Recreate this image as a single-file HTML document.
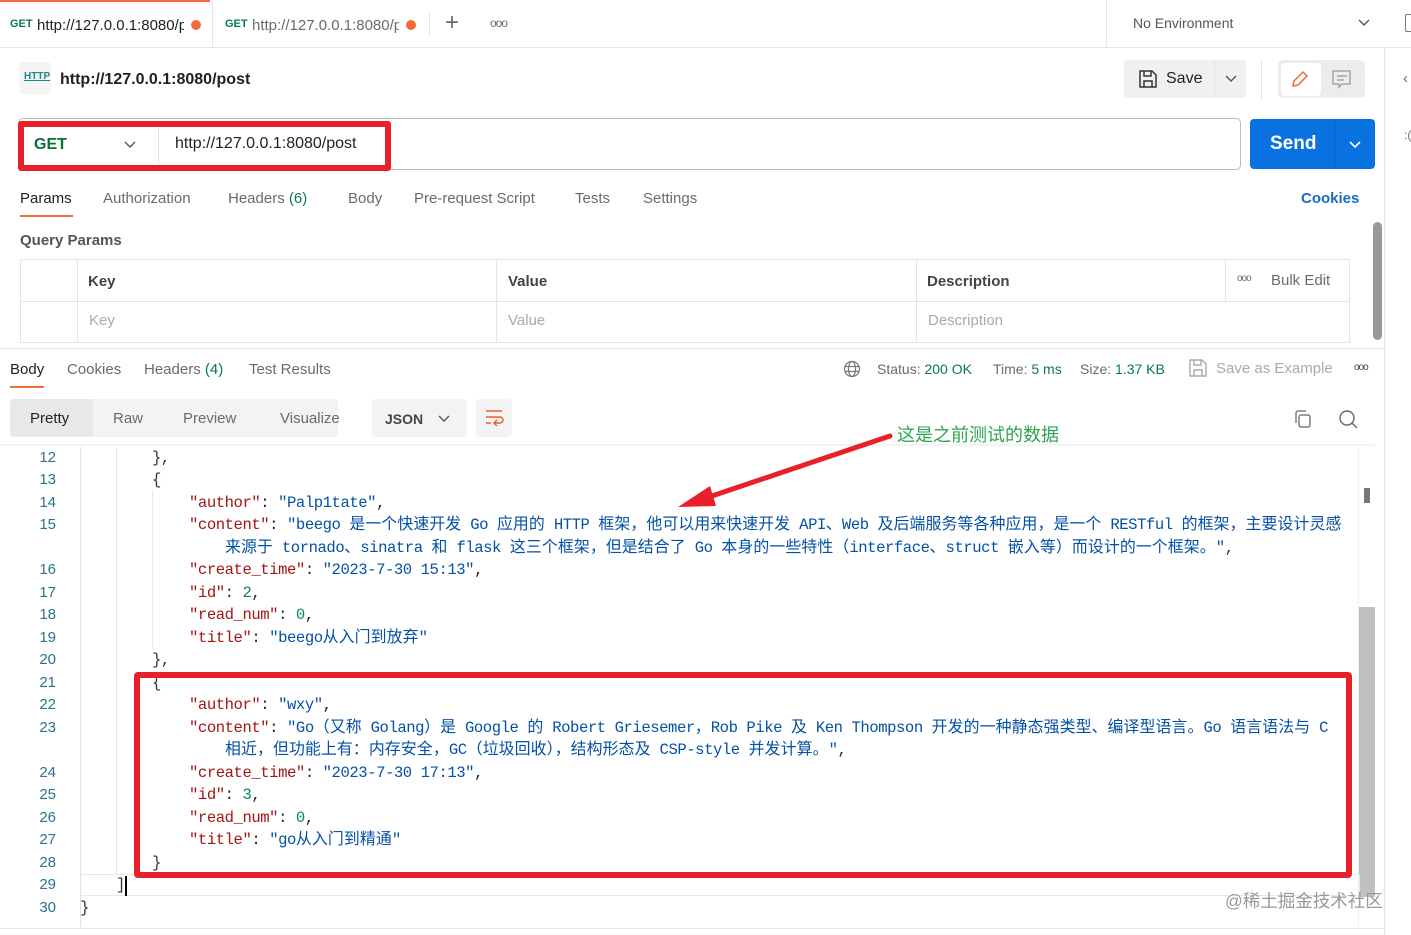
<!DOCTYPE html>
<html><head><meta charset="utf-8"><style>
*{margin:0;padding:0;box-sizing:border-box}
body{width:1411px;height:935px;overflow:hidden;background:#fff;font-family:"Liberation Sans","Noto Sans CJK SC",sans-serif;color:#212121;position:relative}
.a{position:absolute;white-space:nowrap}
.g{color:#6b6b6b}
.code{font-family:"Liberation Mono","Noto Sans CJK SC",monospace;font-size:15.6px;line-height:20px;height:20px;letter-spacing:-0.45px}
.c{font-size:15.9px;letter-spacing:0.1px}
.k{color:#a31515}.s{color:#0451a5}.n{color:#098658}.p{color:#333}
.ln{position:absolute;width:56px;text-align:right;color:#2b7489;font-family:"Liberation Sans",sans-serif;font-size:15px}
</style></head><body>
<!-- tab bar -->
<div class="a" style="left:0;top:0;width:210px;height:2px;background:#f26b3a"></div>
<div class="a" style="left:0;top:47px;width:1411px;height:1px;background:#e6e6e6"></div>
<div class="a" style="left:212px;top:0;width:1px;height:47px;background:#e6e6e6"></div>
<div class="a" style="left:10px;top:18px;font-size:11px;font-weight:bold;color:#0a7a4a">GET</div>
<div class="a" style="left:37px;top:17px;font-size:15px;width:147px;overflow:hidden">http://127.0.0.1:8080/post</div>
<div class="a" style="left:191px;top:20px;width:10px;height:10px;border-radius:5px;background:#f26b3a"></div>
<div class="a" style="left:225px;top:18px;font-size:11px;font-weight:bold;color:#0a7a4a">GET</div>
<div class="a g" style="left:252px;top:17px;font-size:15px;width:147px;overflow:hidden">http://127.0.0.1:8080/post</div>
<div class="a" style="left:406px;top:20px;width:10px;height:10px;border-radius:5px;background:#f26b3a"></div>
<div class="a" style="left:429px;top:12px;width:1px;height:24px;background:#e6e6e6"></div>
<div class="a g" style="left:445px;top:9px;font-size:24px;font-weight:300">+</div>
<div class="a g" style="left:490px;top:16px;font-size:12px;letter-spacing:-1px">ooo</div>
<div class="a" style="left:1106px;top:0;width:1px;height:47px;background:#e6e6e6"></div>
<div class="a g" style="left:1133px;top:15px;font-size:14px;color:#555">No Environment</div>
<svg class="a" style="left:1357px;top:17px" width="14" height="12"><path d="M2 3l5 5 5-5" stroke="#555" fill="none" stroke-width="1.4"/></svg>
<div class="a" style="left:1405px;top:14px;width:8px;height:18px;border:1.5px solid #777;border-radius:2px"></div>
<!-- right sidebar -->
<div class="a" style="left:1384px;top:48px;width:1px;height:887px;background:#e6e6e6"></div>
<div class="a g" style="left:1403px;top:70px;font-size:15px">‹</div>
<div class="a g" style="left:1404px;top:128px;font-size:12px">:(</div>
<!-- request title -->
<div class="a" style="left:19px;top:62px;width:32px;height:32px;background:#f4f4f4;border-radius:4px"></div>
<div class="a" style="left:24px;top:71px;font-size:10px;color:#1a8a8a;text-decoration:underline;font-weight:bold">HTTP</div>
<div class="a" style="left:60px;top:71px;font-size:16px;font-weight:bold">http://127.0.0.1:8080/post</div>
<div class="a" style="left:1124px;top:60px;width:122px;height:38px;background:#f0f0f0;border-radius:4px"></div>
<div class="a" style="left:1214px;top:60px;width:1px;height:38px;background:#e2e2e2"></div>
<svg class="a" style="left:1138px;top:69px" width="20" height="20"><path d="M2 2h12l4 4v12H2z M6 2v5h7V2 M6 18v-6h8v6" stroke="#333" fill="none" stroke-width="1.5"/></svg>
<div class="a" style="left:1166px;top:70px;font-size:16px">Save</div>
<svg class="a" style="left:1224px;top:73px" width="14" height="12"><path d="M2 3l5 5 5-5" stroke="#555" fill="none" stroke-width="1.4"/></svg>
<div class="a" style="left:1261px;top:60px;width:1px;height:40px;background:#e6e6e6"></div>
<div class="a" style="left:1278px;top:60px;width:87px;height:38px;background:#ececec;border-radius:5px"></div>
<div class="a" style="left:1281px;top:63px;width:40px;height:33px;background:#fff;border-radius:4px"></div>
<svg class="a" style="left:1290px;top:69px" width="20" height="20"><path d="M3 17l1-5L13 3l4 4-9 9z" stroke="#f26b3a" fill="none" stroke-width="1.5"/></svg>
<svg class="a" style="left:1331px;top:69px" width="22" height="20"><path d="M2 2h17v13h-8l-3 3v-3H2z M6 7h10 M6 11h7" stroke="#999" fill="none" stroke-width="1.3"/></svg>
<!-- url bar -->
<div class="a" style="left:18px;top:118px;width:1223px;height:52px;border:1px solid #bbb;border-radius:5px"></div>
<div class="a" style="left:18px;top:121px;width:373px;height:50px;border:6px solid #e8202a;border-radius:3px"></div>
<div class="a" style="left:158px;top:127px;width:1px;height:36px;background:#e0e0e0"></div>
<div class="a" style="left:34px;top:136px;font-size:16px;font-weight:bold;color:#0a6e3a">GET</div>
<svg class="a" style="left:123px;top:139px" width="14" height="12"><path d="M2 3l5 5 5-5" stroke="#555" fill="none" stroke-width="1.4"/></svg>
<div class="a" style="left:175px;top:135px;font-size:16px">http://127.0.0.1:8080/post</div>
<div class="a" style="left:1250px;top:119px;width:125px;height:50px;background:#0a72e0;border-radius:4px"></div>
<div class="a" style="left:1334px;top:119px;width:1px;height:50px;background:#0960bd"></div>
<div class="a" style="left:1270px;top:133px;font-size:19px;font-weight:bold;color:#fff">Send</div>
<svg class="a" style="left:1348px;top:139px" width="14" height="12"><path d="M2 3l5 5 5-5" stroke="#fff" fill="none" stroke-width="1.6"/></svg>
<!-- request tabs -->
<div class="a" style="left:20px;top:190px;font-size:15px">Params</div>
<div class="a" style="left:20px;top:215px;width:53px;height:2px;background:#f26b3a"></div>
<div class="a g" style="left:103px;top:190px;font-size:15px">Authorization</div>
<div class="a g" style="left:228px;top:190px;font-size:15px">Headers <span style="color:#0a7a4a">(6)</span></div>
<div class="a g" style="left:348px;top:190px;font-size:15px">Body</div>
<div class="a g" style="left:414px;top:190px;font-size:15px">Pre-request Script</div>
<div class="a g" style="left:575px;top:190px;font-size:15px">Tests</div>
<div class="a g" style="left:643px;top:190px;font-size:15px">Settings</div>
<div class="a" style="left:1301px;top:190px;font-size:15px;font-weight:bold;color:#1a6bc4">Cookies</div>
<div class="a" style="left:20px;top:232px;font-size:15px;font-weight:bold;color:#555">Query Params</div>
<!-- scrollbar -->
<div class="a" style="left:1373px;top:222px;width:9px;height:118px;background:#999;border-radius:5px"></div>
<!-- table -->
<div class="a" style="left:20px;top:259px;width:1330px;height:84px;border:1px solid #e4e4e4"></div>
<div class="a" style="left:20px;top:301px;width:1330px;height:1px;background:#e4e4e4"></div>
<div class="a" style="left:77px;top:259px;width:1px;height:84px;background:#e4e4e4"></div>
<div class="a" style="left:496px;top:259px;width:1px;height:84px;background:#e4e4e4"></div>
<div class="a" style="left:916px;top:259px;width:1px;height:84px;background:#e4e4e4"></div>
<div class="a" style="left:1225px;top:259px;width:1px;height:42px;background:#e4e4e4"></div>
<div class="a" style="left:88px;top:273px;font-size:15px;font-weight:bold;color:#444">Key</div>
<div class="a" style="left:508px;top:273px;font-size:15px;font-weight:bold;color:#444">Value</div>
<div class="a" style="left:927px;top:273px;font-size:15px;font-weight:bold;color:#444">Description</div>
<div class="a g" style="left:1237px;top:273px;font-size:10px;letter-spacing:-1px">ooo</div>
<div class="a g" style="left:1271px;top:272px;font-size:15px">Bulk Edit</div>
<div class="a" style="left:89px;top:312px;font-size:15px;color:#aaa">Key</div>
<div class="a" style="left:508px;top:312px;font-size:15px;color:#aaa">Value</div>
<div class="a" style="left:928px;top:312px;font-size:15px;color:#aaa">Description</div>
<div class="a" style="left:0;top:348px;width:1384px;height:1px;background:#e6e6e6"></div>
<!-- response tabs -->
<div class="a" style="left:10px;top:361px;font-size:15px">Body</div>
<div class="a" style="left:10px;top:386px;width:34px;height:2px;background:#f26b3a"></div>
<div class="a g" style="left:67px;top:361px;font-size:15px">Cookies</div>
<div class="a g" style="left:144px;top:361px;font-size:15px">Headers <span style="color:#0a7a4a">(4)</span></div>
<div class="a g" style="left:249px;top:361px;font-size:15px">Test Results</div>
<svg class="a" style="left:843px;top:360px" width="18" height="18"><circle cx="9" cy="9" r="7.5" stroke="#777" fill="none" stroke-width="1.2"/><ellipse cx="9" cy="9" rx="3.5" ry="7.5" stroke="#777" fill="none" stroke-width="1.2"/><path d="M2 6.5h14M2 11.5h14" stroke="#777" stroke-width="1.2"/></svg>
<div class="a g" style="left:877px;top:361px;font-size:14px">Status: <span style="color:#0a7a4a">200 OK</span></div>
<div class="a g" style="left:993px;top:361px;font-size:14px">Time: <span style="color:#0a7a4a">5 ms</span></div>
<div class="a g" style="left:1080px;top:361px;font-size:14px">Size: <span style="color:#0a7a4a">1.37 KB</span></div>
<svg class="a" style="left:1188px;top:358px" width="20" height="20"><path d="M2 2h12l4 4v12H2z M6 2v5h7V2 M6 18v-6h8v6" stroke="#aaa" fill="none" stroke-width="1.4"/></svg>
<div class="a" style="left:1216px;top:360px;font-size:15px;color:#aaa">Save as Example</div>
<div class="a g" style="left:1354px;top:362px;font-size:10px;letter-spacing:-1px;color:#444">ooo</div>
<div class="a" style="left:10px;top:399px;width:328px;height:38px;background:#f3f3f3;border-radius:4px"></div>
<div class="a" style="left:10px;top:399px;width:83px;height:38px;background:#e8e8e8;border-radius:4px 0 0 4px"></div>
<div class="a" style="left:30px;top:410px;font-size:15px">Pretty</div>
<div class="a g" style="left:113px;top:410px;font-size:15px">Raw</div>
<div class="a g" style="left:183px;top:410px;font-size:15px">Preview</div>
<div class="a g" style="left:280px;top:410px;font-size:15px">Visualize</div>
<div class="a" style="left:372px;top:399px;width:95px;height:38px;background:#f3f3f3;border-radius:4px"></div>
<div class="a" style="left:385px;top:411px;font-size:14px;font-weight:bold;color:#444">JSON</div>
<svg class="a" style="left:437px;top:413px" width="14" height="12"><path d="M2 3l5 5 5-5" stroke="#555" fill="none" stroke-width="1.4"/></svg>
<div class="a" style="left:476px;top:399px;width:36px;height:38px;background:#f3f3f3;border-radius:4px"></div>
<svg class="a" style="left:484px;top:408px" width="20" height="20"><path d="M2 3h16M2 9h14a3 3 0 010 6h-5M13 12l-3 3 3 3M2 15h5" stroke="#e8602c" fill="none" stroke-width="1.4"/></svg>
<svg class="a" style="left:1293px;top:409px" width="20" height="20"><rect x="6" y="6" width="11" height="12" rx="2" stroke="#666" fill="none" stroke-width="1.3"/><path d="M3 14V4a2 2 0 012-2h8" stroke="#666" fill="none" stroke-width="1.3"/></svg>
<svg class="a" style="left:1338px;top:409px" width="20" height="20"><circle cx="9" cy="9" r="7" stroke="#666" fill="none" stroke-width="1.4"/><path d="M14 14l5 5" stroke="#666" stroke-width="1.4"/></svg>
<div class="a" style="left:0;top:444px;width:1375px;height:3px;background:linear-gradient(#eee,#fff)"></div>
<!-- code area -->
<div class="a" style="left:80px;top:447px;width:1px;height:480px;background:#e2e2e2"></div>
<div class="a" style="left:116px;top:447px;width:1px;height:430px;background:#e8e8e8"></div>
<div class="a" style="left:152px;top:490px;width:1px;height:160px;background:#e8e8e8"></div>
<div class="a" style="left:1358px;top:447px;width:1px;height:480px;background:#eee"></div>
<div class="a" style="left:1359px;top:607px;width:16px;height:290px;background:#c0c0c0"></div>
<div class="a" style="left:1364px;top:488px;width:6px;height:15px;background:#777"></div>
<div class="a" style="left:0;top:928px;width:1384px;height:1px;background:#e6e6e6"></div>

<div class="ln" style="top:449px">12</div><div class="a code p" style="left:152px;top:448px">},</div>
<div class="ln" style="top:471px">13</div><div class="a code p" style="left:152px;top:470px">{</div>
<div class="ln" style="top:494px">14</div><div class="a code" style="left:189px;top:493px"><span class="k">"author"</span>: <span class="s">"Palp1tate"</span>,</div>
<div class="ln" style="top:516px">15</div><div class="a code" style="left:189px;top:515px"><span class="k">"content"</span>: <span class="s">"beego <span class="c">是一个快速开发</span> Go <span class="c">应用的</span> HTTP <span class="c">框架，他可以用来快速开发</span> API<span class="c">、</span>Web <span class="c">及后端服务等各种应用，是一个</span> RESTful <span class="c">的框架，主要设计灵感</span></span></div>
<div class="a code s" style="left:225px;top:538px"><span class="c">来源于</span> tornado<span class="c">、</span>sinatra <span class="c">和</span> flask <span class="c">这三个框架，但是结合了</span> Go <span class="c">本身的一些特性（</span>interface<span class="c">、</span>struct <span class="c">嵌入等）而设计的一个框架。</span>"<span class="p">,</span></div>
<div class="ln" style="top:561px">16</div><div class="a code" style="left:189px;top:560px"><span class="k">"create_time"</span>: <span class="s">"2023-7-30 15:13"</span>,</div>
<div class="ln" style="top:584px">17</div><div class="a code" style="left:189px;top:583px"><span class="k">"id"</span>: <span class="n">2</span>,</div>
<div class="ln" style="top:606px">18</div><div class="a code" style="left:189px;top:605px"><span class="k">"read_num"</span>: <span class="n">0</span>,</div>
<div class="ln" style="top:629px">19</div><div class="a code" style="left:189px;top:628px"><span class="k">"title"</span>: <span class="s">"beego<span class="c">从入门到放弃</span>"</span></div>
<div class="ln" style="top:651px">20</div><div class="a code p" style="left:152px;top:650px">},</div>
<div class="ln" style="top:674px">21</div><div class="a code p" style="left:152px;top:673px">{</div>
<div class="ln" style="top:696px">22</div><div class="a code" style="left:189px;top:695px"><span class="k">"author"</span>: <span class="s">"wxy"</span>,</div>
<div class="ln" style="top:719px">23</div><div class="a code" style="left:189px;top:718px"><span class="k">"content"</span>: <span class="s">"Go<span class="c">（又称</span> Golang<span class="c">）是</span> Google <span class="c">的</span> Robert Griesemer<span class="c">，</span>Rob Pike <span class="c">及</span> Ken Thompson <span class="c">开发的一种静态强类型、编译型语言。</span>Go <span class="c">语言语法与</span> C</span></div>
<div class="a code s" style="left:225px;top:740px"><span class="c">相近，但功能上有：内存安全，</span>GC<span class="c">（垃圾回收），结构形态及</span> CSP-style <span class="c">并发计算。</span>"<span class="p">,</span></div>
<div class="ln" style="top:764px">24</div><div class="a code" style="left:189px;top:763px"><span class="k">"create_time"</span>: <span class="s">"2023-7-30 17:13"</span>,</div>
<div class="ln" style="top:786px">25</div><div class="a code" style="left:189px;top:785px"><span class="k">"id"</span>: <span class="n">3</span>,</div>
<div class="ln" style="top:809px">26</div><div class="a code" style="left:189px;top:808px"><span class="k">"read_num"</span>: <span class="n">0</span>,</div>
<div class="ln" style="top:831px">27</div><div class="a code" style="left:189px;top:830px"><span class="k">"title"</span>: <span class="s">"go<span class="c">从入门到精通</span>"</span></div>
<div class="ln" style="top:854px">28</div><div class="a code p" style="left:152px;top:853px">}</div>
<div class="ln" style="top:876px">29</div><div class="a code p" style="left:116px;top:875px">]</div>
<div class="a" style="left:80px;top:874px;width:1280px;height:22px;border:1px solid #e8e8e8;border-left:none"></div>
<div class="a" style="left:125px;top:876px;width:2px;height:20px;background:#000"></div>
<div class="ln" style="top:899px">30</div><div class="a code p" style="left:80px;top:898px">}</div>

<!-- red annotation box -->
<div class="a" style="left:134px;top:672px;width:1218px;height:206px;border:6px solid #e8202a;border-radius:4px"></div>
<!-- arrow -->
<svg class="a" style="left:670px;top:430px" width="230" height="85"><path d="M220 6L30 70" stroke="#e8202a" stroke-width="5" stroke-linecap="round"/><path d="M8 77L40 56L46 76z" fill="#e8202a"/></svg>
<div class="a" style="left:897px;top:421px;font-size:18px;color:#2ea44f">这是之前测试的数据</div>
<div class="a" style="left:1225px;top:888px;font-size:17.5px;color:#999">@稀土掘金技术社区</div>
</body></html>
